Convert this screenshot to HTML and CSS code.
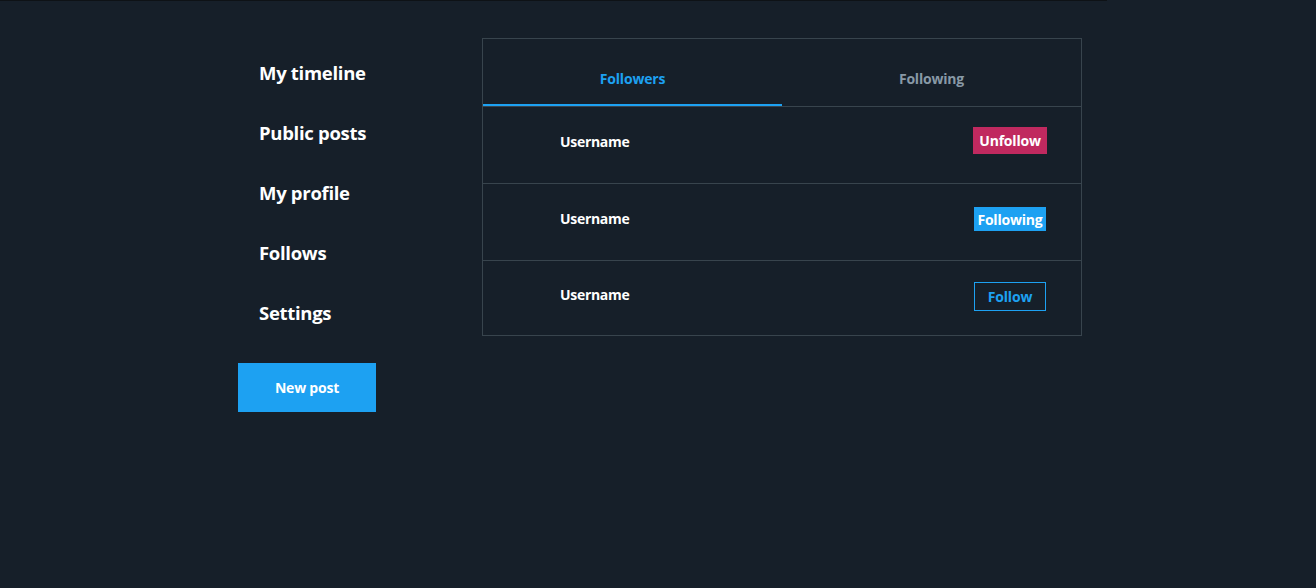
FILE: index.html
```html
<!DOCTYPE html>
<html>
<head>
<meta charset="utf-8">
<link rel="stylesheet" href="styles.css">
</head>
<body>
<div class="topstrip"></div>
<div class="layout">
  <aside class="sidebar">
    <nav class="nav">
      <a class="nav-item">My timeline</a>
      <a class="nav-item">Public posts</a>
      <a class="nav-item">My profile</a>
      <a class="nav-item">Follows</a>
      <a class="nav-item">Settings</a>
    </nav>
    <button class="new-post">New post</button>
  </aside>
  <main class="panel">
    <div class="tabs">
      <div class="tab active">Followers</div>
      <div class="tab">Following</div>
    </div>
    <div class="row">
      <span class="username">Username</span>
      <div class="action"><button class="btn btn-unfollow">Unfollow</button></div>
    </div>
    <div class="row">
      <span class="username">Username</span>
      <div class="action"><button class="btn btn-following">Following</button></div>
    </div>
    <div class="row last">
      <span class="username">Username</span>
      <div class="action"><button class="btn btn-follow">Follow</button></div>
    </div>
  </main>
</div>
</body>
</html>
```
FILE: styles.css
```css
html, body {
  margin: 0;
  padding: 0;
  background: #161f29;
  height: 100%;
}
body {
  font-family: "Open Sans", "Noto Sans", sans-serif;
  color: #ffffff;
}
.topstrip {
  height: 1px;
  width: 1107px;
  background: #0e1216;
}
.layout {
  display: flex;
  align-items: flex-start;
  padding-left: 238px;
  padding-top: 37px;
}
.sidebar {
  width: 244px;
  display: flex;
  flex-direction: column;
}
.nav {
  display: flex;
  flex-direction: column;
  margin-top: 5px;
}
.nav-item {
  height: 60px;
  line-height: 60px;
  padding-left: 21px;
  font-size: 18.5px;
  font-weight: 700;
  color: #ffffff;
  letter-spacing: -0.3px;
}
.new-post {
  margin-top: 20px;
  width: 138px;
  height: 49px;
  border: none;
  background: #1da1f2;
  color: #ffffff;
  font-family: inherit;
  font-size: 14px;
  font-weight: 700;
  letter-spacing: -0.2px;
}
.panel {
  width: 598px;
  border: 1px solid #38444d;
  border-bottom: none;
}
.tabs {
  display: flex;
  border-bottom: 1px solid #38444d;
}
.tab {
  flex: 1;
  height: 51px;
  line-height: 51px;
  padding-top: 14px;
  text-align: center;
  font-size: 14px;
  font-weight: 700;
  color: #8899a6;
  border-bottom: 2px solid transparent;
  letter-spacing: -0.2px;
}
.tab.active {
  color: #1da1f2;
  border-bottom-color: #1da1f2;
}
.row {
  height: 69px;
  padding-bottom: 7px;
  display: flex;
  align-items: center;
  justify-content: space-between;
  padding-left: 77px;
  padding-right: 33px;
  border-bottom: 1px solid #38444d;
}
.row.last {
  height: 67px;
}
.username {
  font-size: 14px;
  font-weight: 700;
  letter-spacing: -0.3px;
  margin-top: -1px;
}
.action {
  width: 76px;
  display: flex;
  justify-content: center;
}
.btn {
  font-family: inherit;
  font-size: 14px;
  font-weight: 700;
  padding: 0 6px;
  border: none;
  color: #ffffff;
  letter-spacing: -0.2px;
}
.btn-unfollow {
  background: #c0295f;
  height: 27px;
  margin-top: -2px;
}
.btn-following {
  background: #1da1f2;
  height: 24px;
  padding: 0 3px;
  margin-top: 1px;
}
.btn-follow {
  background: transparent;
  border: 1px solid #1da1f2;
  color: #1da1f2;
  height: 29px;
  width: 72px;
  margin-top: 4px;
}
```
